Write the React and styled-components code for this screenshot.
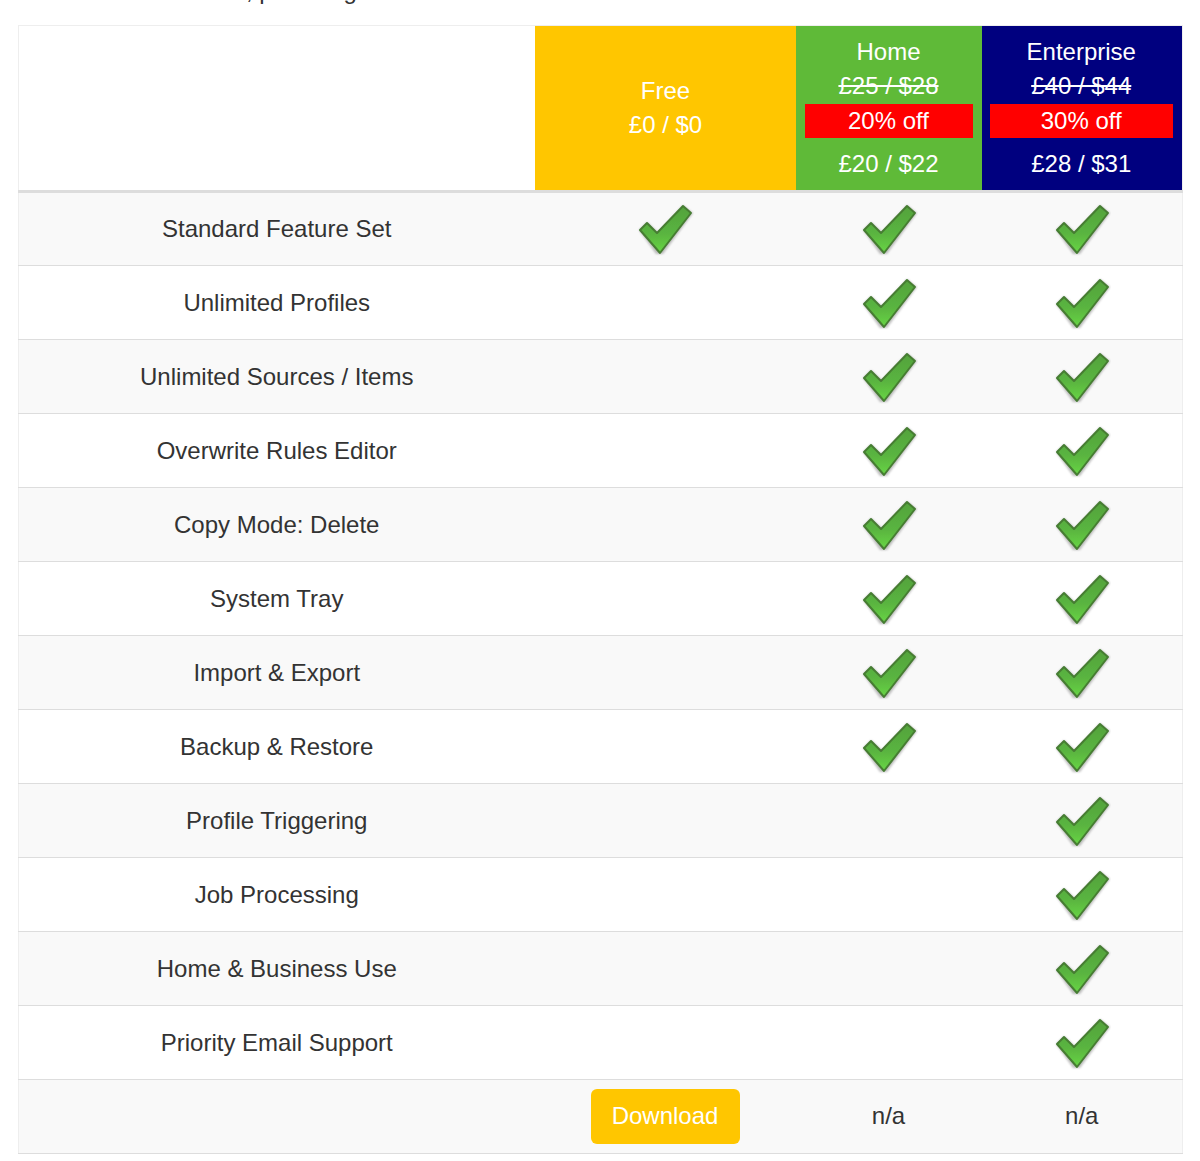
import styled, { createGlobalStyle } from 'styled-components';

const GlobalStyle = createGlobalStyle`
    html, body {
        margin: 0;
        padding: 0;
        background: #fff;
    }
    body {
        font-family: "Liberation Sans", Arial, sans-serif;
        color: #333;
    }
`;

const Page = styled.div`
    width: 1200px;
    padding: 0 17px 0 18px;
    box-sizing: border-box;
`;

const IntroClip = styled.div`
    height: 25px;
    overflow: hidden;
`;

const IntroText = styled.p`
    margin: -22px 0 0;
    padding-left: 228px;
    font-size: 24px;
    line-height: 26px;
    white-space: nowrap;
`;

const PriceTable = styled.table`
    width: 1164px;
    table-layout: fixed;
    border-collapse: collapse;
    border: 1px solid #eee;
    font-size: 24px;
    text-align: center;
`;

const PlanHead = styled.th`
    width: ${p => p.$width}px;
    height: 166px;
    padding: 0 ${p => p.$right}px 0 ${p => p.$left}px;
    box-sizing: border-box;
    vertical-align: middle;
    font-weight: 400;
    line-height: 34px;
    color: #fff;
    background: ${p => p.$color};
    border-bottom: 3px solid #ddd;
`;

const BlankHead = styled.th`
    width: ${p => p.$width}px;
    height: 166px;
    padding: 0;
    box-sizing: border-box;
    background: #fff;
    border-bottom: 3px solid #ddd;
`;

const OldPrice = styled.div`
    text-decoration: line-through;
`;

const Discount = styled.div`
    background: #f00;
    margin: 1px 0 9px;
`;

const Row = styled.tr`
    height: 74px;
    background: ${p => (p.$striped ? '#f9f9f9' : '#fff')};
`;

const Cell = styled.td`
    padding: 0 0 ${p => (p.$raised ? 2 : 0)}px;
    box-sizing: border-box;
    vertical-align: middle;
    border-top: 1px solid #ddd;
    border-bottom: 1px solid #ddd;
`;

const TickIcon = styled.svg`
    display: block;
    margin: 2px auto 0;
    width: 58px;
    height: 54px;
`;

const DownloadButton = styled.a`
    display: inline-block;
    box-sizing: border-box;
    width: 149px;
    height: 55px;
    line-height: 53px;
    border-radius: 6px;
    color: #fff;
    background: #ffc600;
    vertical-align: middle;
`;

function Tick() {
    return (
        <TickIcon viewBox="0 0 58 54" aria-hidden="true">
            <defs>
                <linearGradient id="tickFill" x1="0" y1="0" x2="0" y2="1">
                    <stop offset="0" stopColor="#53a23c" />
                    <stop offset="0.6" stopColor="#5ab540" />
                    <stop offset="1" stopColor="#68d645" />
                </linearGradient>
                <filter id="tickSoft" x="-10%" y="-10%" width="120%" height="120%">
                    <feGaussianBlur stdDeviation="0.9" />
                </filter>
                <filter id="tickEdge" x="-10%" y="-10%" width="120%" height="120%">
                    <feGaussianBlur stdDeviation="0.4" />
                </filter>
            </defs>
            <polygon
                points="3,27 11,19 22,29 47,2 57,10 27,51 20,51"
                fill="#888"
                opacity="0.55"
                filter="url(#tickSoft)"
            />
            <g filter="url(#tickEdge)">
                <polygon
                    points="4,27 11,20 21,30 47,3 55,10 24,50"
                    fill="url(#tickFill)"
                    stroke="#467d33"
                    strokeWidth="2"
                    strokeLinejoin="round"
                />
            </g>
        </TickIcon>
    );
}

const features = [
    { name: 'Standard Feature Set', free: true, home: true, enterprise: true },
    { name: 'Unlimited Profiles', home: true, enterprise: true },
    { name: 'Unlimited Sources / Items', home: true, enterprise: true },
    { name: 'Overwrite Rules Editor', home: true, enterprise: true },
    { name: 'Copy Mode: Delete', home: true, enterprise: true },
    { name: 'System Tray', home: true, enterprise: true },
    { name: 'Import & Export', home: true, enterprise: true },
    { name: 'Backup & Restore', home: true, enterprise: true },
    { name: 'Profile Triggering', enterprise: true },
    { name: 'Job Processing', enterprise: true },
    { name: 'Home & Business Use', enterprise: true },
    { name: 'Priority Email Support', enterprise: true },
];

export default function App() {
    return (
        <Page>
            <GlobalStyle />
            <IntroClip>
                <IntroText>, providing</IntroText>
            </IntroClip>
            <PriceTable>
                <thead>
                    <tr>
                        <BlankHead $width={516} />
                        <PlanHead $width={261} $left={9} $right={8} $color="#ffc600">
                            <div>Free</div>
                            <div>£0 / $0</div>
                        </PlanHead>
                        <PlanHead $width={186} $left={9} $right={9} $color="#5fba38">
                            <div>Home</div>
                            <OldPrice>£25 / $28</OldPrice>
                            <Discount>20% off</Discount>
                            <div>£20 / $22</div>
                        </PlanHead>
                        <PlanHead $width={201} $left={8} $right={9} $color="#00007f">
                            <div>Enterprise</div>
                            <OldPrice>£40 / $44</OldPrice>
                            <Discount>30% off</Discount>
                            <div>£28 / $31</div>
                        </PlanHead>
                    </tr>
                </thead>
                <tbody>
                    {features.map((feature, i) => (
                        <Row key={feature.name} $striped={i % 2 === 0}>
                            <Cell>{feature.name}</Cell>
                            <Cell>{feature.free && <Tick />}</Cell>
                            <Cell>{feature.home && <Tick />}</Cell>
                            <Cell>{feature.enterprise && <Tick />}</Cell>
                        </Row>
                    ))}
                    <Row $striped>
                        <Cell />
                        <Cell>
                            <DownloadButton>Download</DownloadButton>
                        </Cell>
                        <Cell $raised>n/a</Cell>
                        <Cell $raised>n/a</Cell>
                    </Row>
                </tbody>
            </PriceTable>
        </Page>
    );
}
